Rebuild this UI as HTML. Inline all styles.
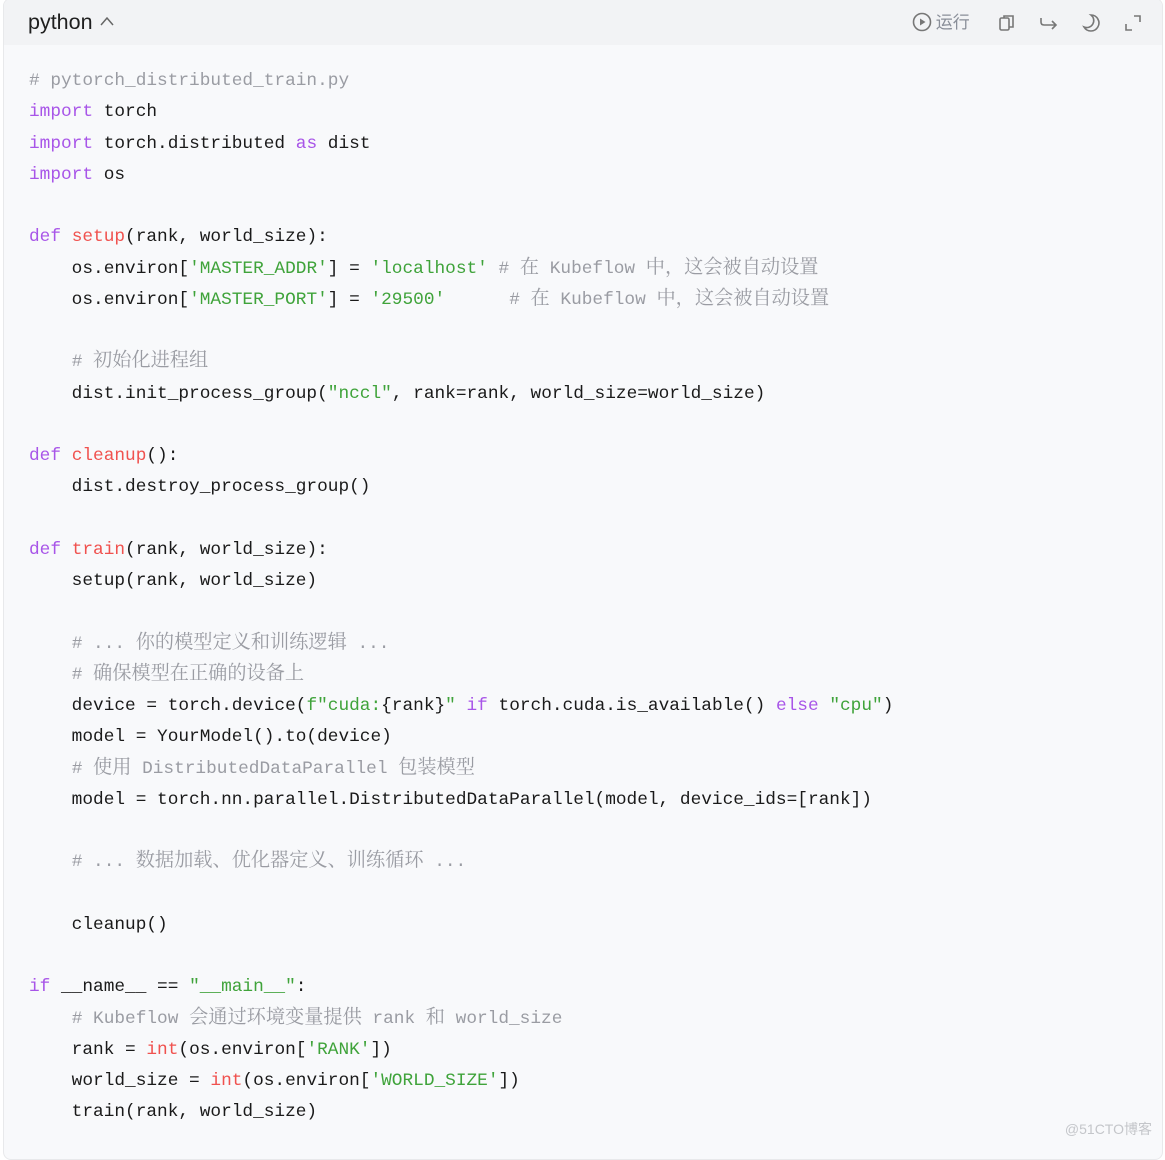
<!DOCTYPE html>
<html><head><meta charset="utf-8">
<style>
html,body{margin:0;padding:0;background:#fff;width:1165px;height:1148px;overflow:hidden}
.card{position:absolute;left:3px;top:-2px;width:1158px;height:1160px;border:1px solid #e8e9eb;border-radius:8px;background:#f8f9fb;overflow:hidden}
.hd{height:46px;background:#f2f3f5;position:relative}
.lang{position:absolute;left:24px;top:11px;font:21.5px "Liberation Sans","Noto Sans CJK SC",sans-serif;color:#1f1f1f}
.tools{position:absolute;right:20px;top:11px;height:28px}
.tools svg{position:absolute;top:3px}
.run{position:absolute;font:17px "Noto Sans CJK SC",sans-serif;color:#8a8f99;white-space:nowrap;line-height:22px}
pre{margin:0;position:absolute;left:25px;top:67px;font:17.8px/31.25px "Liberation Mono","DejaVu Sans Mono",monospace;color:#1a1a1a}
.k{color:#a855e8}.f{color:#f0524f}.s{color:#3fa33a}.c{color:#9a9ca3}
.z{font-family:"Noto Serif CJK SC","Noto Sans CJK SC",serif;font-size:19.2px;line-height:0}
.wm{position:absolute;right:10px;bottom:20px;font:14px "Liberation Sans","Noto Sans CJK SC",sans-serif;color:#c4c6ca}
</style></head><body>
<div class="card">
<div class="hd">
<div class="lang">python <svg width="16" height="12" viewBox="0 0 16 12" style="vertical-align:2px"><path d="M2 10 L8 3 L14 10" fill="none" stroke="#666" stroke-width="1.5"/></svg></div>
<div class="tools" style="width:240px">
<div class="run" style="left:10px;top:0px"><svg width="20" height="20" viewBox="0 0 20 20" style="position:static;vertical-align:-4px"><circle cx="10" cy="10" r="8.5" fill="none" stroke="#777" stroke-width="1.6"/><path d="M8 6.5 L13.5 10 L8 13.5Z" fill="#777"/></svg> 运行</div>
<svg style="left:96px" width="18" height="20" viewBox="0 0 18 20"><rect x="2" y="5" width="9" height="12" rx="1.5" fill="none" stroke="#777" stroke-width="1.6"/><path d="M6 5 V3 H15 V14 H11" fill="none" stroke="#777" stroke-width="1.6"/></svg>
<svg style="left:137px" width="20" height="20" viewBox="0 0 20 20"><path d="M2 5 V9 Q2 12 5 12 H17 M13 8 L17 12 L13 16" fill="none" stroke="#777" stroke-width="1.6"/></svg>
<svg style="left:180px" width="20" height="20" viewBox="0 0 20 20"><path d="M9 2 A8 8 0 1 1 2 14 A7 7 0 0 0 9 2Z" fill="none" stroke="#777" stroke-width="1.6"/></svg>
<svg style="left:221px" width="20" height="20" viewBox="0 0 20 20"><path d="M11 3 H17 V9 M3 11 V17 H9" fill="none" stroke="#777" stroke-width="1.6"/></svg>
</div>
</div>
<pre><span class="c"># pytorch_distributed_train.py</span>
<span class="k">import</span> torch
<span class="k">import</span> torch.distributed <span class="k">as</span> dist
<span class="k">import</span> os

<span class="k">def</span> <span class="f">setup</span>(rank, world_size):
    os.environ[<span class="s">'MASTER_ADDR'</span>] = <span class="s">'localhost'</span> <span class="c"># <span class="z">在</span> Kubeflow <span class="z">中，这会被自动设置</span></span>
    os.environ[<span class="s">'MASTER_PORT'</span>] = <span class="s">'29500'</span>      <span class="c"># <span class="z">在</span> Kubeflow <span class="z">中，这会被自动设置</span></span>

    <span class="c"># <span class="z">初始化进程组</span></span>
    dist.init_process_group(<span class="s">"nccl"</span>, rank=rank, world_size=world_size)

<span class="k">def</span> <span class="f">cleanup</span>():
    dist.destroy_process_group()

<span class="k">def</span> <span class="f">train</span>(rank, world_size):
    setup(rank, world_size)

    <span class="c"># ... <span class="z">你的模型定义和训练逻辑</span> ...</span>
    <span class="c"># <span class="z">确保模型在正确的设备上</span></span>
    device = torch.device(<span class="s">f"cuda:</span>{rank}<span class="s">"</span> <span class="k">if</span> torch.cuda.is_available() <span class="k">else</span> <span class="s">"cpu"</span>)
    model = YourModel().to(device)
    <span class="c"># <span class="z">使用</span> DistributedDataParallel <span class="z">包装模型</span></span>
    model = torch.nn.parallel.DistributedDataParallel(model, device_ids=[rank])

    <span class="c"># ... <span class="z">数据加载、优化器定义、训练循环</span> ...</span>

    cleanup()

<span class="k">if</span> __name__ == <span class="s">"__main__"</span>:
    <span class="c"># Kubeflow <span class="z">会通过环境变量提供</span> rank <span class="z">和</span> world_size</span>
    rank = <span class="f">int</span>(os.environ[<span class="s">'RANK'</span>])
    world_size = <span class="f">int</span>(os.environ[<span class="s">'WORLD_SIZE'</span>])
    train(rank, world_size)</pre>
<div class="wm">@51CTO博客</div>
</div>
</body></html>
